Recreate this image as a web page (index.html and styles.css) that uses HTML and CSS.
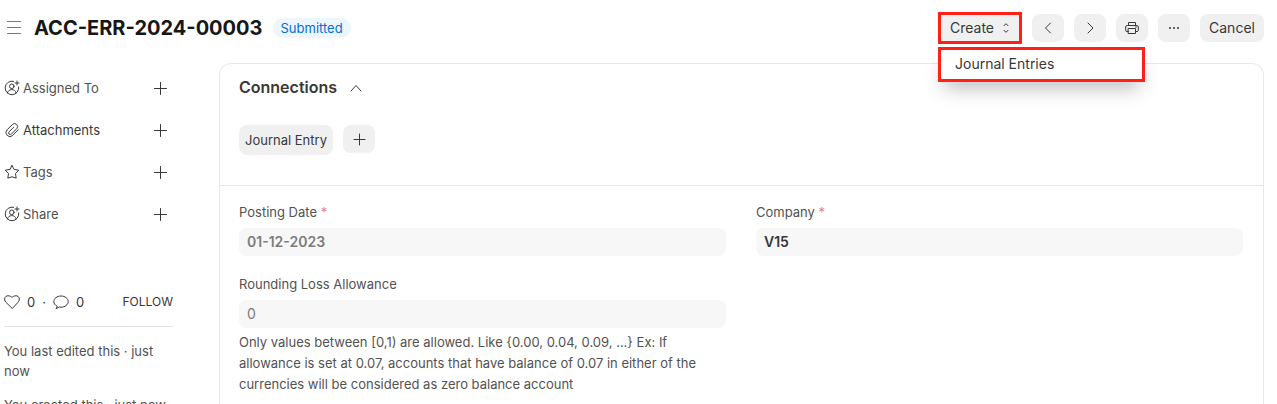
FILE: index.html
```html
<!DOCTYPE html>
<html lang="en">
<head>
<meta charset="utf-8">
<meta name="viewport" content="width=device-width, initial-scale=1">
<title>ACC-ERR-2024-00003</title>
<link rel="stylesheet" href="styles.css">
</head>
<body>
<svg class="defs" aria-hidden="true">
  <symbol id="assign" viewBox="0 0 16 16">
    <path d="M9.6 1.3A6.8 6.8 0 1 0 14.7 6.9"/>
    <circle cx="7.8" cy="6.3" r="2.3"/>
    <path d="M3.4 12.9c.5-2 2.200-3.300 4.400-3.300s3.900 1.300 4.400 3.300M13 1v4M11 3h4"/>
  </symbol>
  <symbol id="plus" viewBox="0 0 16 16"><path d="M8.500 3v11M3 8.500h11"/></symbol>
  <symbol id="plus-large" viewBox="0 0 16 16"><path d="M8.500 2.500v12M2.500 8.500h12"/></symbol>
</svg>
<div class="app">
  <header class="page-head">
    <div class="title-area">
      <button class="menu-toggle" aria-label="Toggle sidebar">
        <svg width="16" height="16" viewBox="0 0 16 16"><path d="M1.500 1.500h13M1.500 7.500h13M1.500 13.500h13"/></svg>
      </button>
      <h1 class="title">ACC-ERR-2024-00003</h1>
      <span class="status">Submitted</span>
    </div>
    <div class="actions">
      <div class="create">
        <button class="btn create-btn" aria-expanded="true">Create
          <svg width="8" height="12" viewBox="0 0 8 12"><path d="M2 3.700l2-2 2 2M2 8.300l2 2 2-2"/></svg>
        </button>
        <div class="menu">
          <a class="menu-item" href="#">Journal Entries</a>
        </div>
      </div>
      <button class="btn icon-btn" aria-label="Previous"><svg width="16" height="16" viewBox="0 0 16 16"><path d="M10.500 3L5.500 8l5 5"/></svg></button>
      <button class="btn icon-btn" aria-label="Next"><svg width="16" height="16" viewBox="0 0 16 16"><path d="M6 3l5 5-5 5"/></svg></button>
      <button class="btn icon-btn" aria-label="Print"><svg width="16" height="16" viewBox="0 0 16 16"><path d="M4.500 5.500V2.500h7v3M4.500 11.500H3A1.300 1.300 0 0 1 1.700 10.200V7A1.500 1.500 0 0 1 3.200 5.500h9.600A1.500 1.500 0 0 1 14.300 7v3.200a1.300 1.300 0 0 1-1.300 1.300h-1.500M4.500 8.500h7v5h-7zM11.500 7h1"/></svg></button>
      <button class="btn icon-btn" aria-label="More"><svg class="dots" width="16" height="16" viewBox="0 0 16 16"><circle cx="4" cy="8" r="1"/><circle cx="8" cy="8" r="1"/><circle cx="12" cy="8" r="1"/></svg></button>
      <button class="btn cancel-btn">Cancel</button>
    </div>
  </header>
  <div class="body">
    <aside class="sidebar">
      <ul class="side-list">
        <li class="side-row"><svg width="16" height="16"><use href="#assign"/></svg><span>Assigned To</span><button class="add" aria-label="Assign"><svg width="16" height="16"><use href="#plus-large"/></svg></button></li>
        <li class="side-row strong"><svg width="16" height="16" viewBox="0 0 16 16"><path d="M13.700 7.100l-5.500 5.700a4 4 0 0 1-5.700-5.600l5.300-5.300a2.900 2.900 0 0 1 4.300-.1 2.900 2.900 0 0 1 .1 4.200l-5.300 5.300a1.500 1.500 0 0 1-2.300 0 1.600 1.600 0 0 1 0-2.200l4.500-4.500" transform="translate(.5 .7)"/></svg><span>Attachments</span><button class="add" aria-label="Attach"><svg width="16" height="16"><use href="#plus-large"/></svg></button></li>
        <li class="side-row"><svg width="16" height="16" viewBox="0 0 16 16"><path d="M8 1.500l2.100 3.900 4.600.8-3.200 3.300.7 4.600L8 12.800 3.800 14.100l.7-4.600L1.300 6.200l4.600-.8z"/></svg><span>Tags</span><button class="add" aria-label="Add tag"><svg width="16" height="16"><use href="#plus-large"/></svg></button></li>
        <li class="side-row"><svg width="16" height="16"><use href="#assign"/></svg><span>Share</span><button class="add" aria-label="Share"><svg width="16" height="16"><use href="#plus-large"/></svg></button></li>
      </ul>
      <div class="stats">
        <button class="stat"><svg width="16" height="16" viewBox="0 0 16 16"><path d="M8 14.300L1.700 8C-.5 5.500.8 1.800 4 1.800c1.800 0 3.100.8 4 1.600.9-.8 2.200-1.600 4-1.600 3.200 0 4.500 3.700 2.300 6.200z"/></svg>0</button>
        <span>·</span>
        <button class="stat"><svg width="16" height="16" viewBox="0 0 16 16"><path d="M4 12.200C2 11.200.8 9.500.8 7.600.8 4.500 4 2 8 2s7.200 2.500 7.200 5.600S12 13.200 8 13.200c-.6 0-1.200 0-1.800-.2L3.400 14.500z"/></svg>0</button>
        <button class="follow">FOLLOW</button>
      </div>
      <p class="activity">You last edited this · just now</p>
      <p class="activity">You created this · just now</p>
    </aside>
    <main class="card">
      <section class="connections">
        <h2 class="section-title">Connections
          <svg width="16" height="16" viewBox="0 0 16 16"><path d="M3 12L8 6.500 13 12"/></svg>
        </h2>
        <div class="links">
          <button class="btn doc-link">Journal Entry</button>
          <button class="btn add-link" aria-label="New Journal Entry"><svg width="16" height="16"><use href="#plus"/></svg></button>
        </div>
      </section>
      <section class="fields">
        <div class="column">
          <div class="field">
            <label for="date">Posting Date <span class="req">*</span></label>
            <input class="muted bold" id="date" value="01-12-2023" readonly>
          </div>
          <div class="field">
            <label for="loss">Rounding Loss Allowance</label>
            <input class="muted" id="loss" value="0" readonly>
            <p class="help">Only values between [0,1) are allowed. Like {0.00, 0.04, 0.09, ...} Ex: If allowance is set at 0.07, accounts that have balance of 0.07 in either of the currencies will be considered as zero balance account</p>
          </div>
        </div>
        <div class="column">
          <div class="field">
            <label for="company">Company <span class="req">*</span></label>
            <input class="bold" id="company" value="V15" readonly>
          </div>
        </div>
      </section>
    </main>
  </div>
</div>
</body>
</html>
```
FILE: styles.css
```css
* { box-sizing: border-box; }
body {
  margin: 0;
  background: #fff;
  color: #383838;
  font: 13px/20px Inter, "Liberation Sans", sans-serif;
}
h1, h2, p, ul { margin: 0; padding: 0; }
button, input { font: inherit; color: inherit; border: 0; }
button { background: none; padding: 0; }
svg {
  display: block;
  flex: none;
  fill: none;
  stroke: #383838;
  stroke-width: 1;
  stroke-linecap: round;
  stroke-linejoin: round;
}
.defs { position: absolute; width: 0; height: 0; }
.app {
  display: flex;
  flex-direction: column;
  height: 100vh;
  overflow: hidden;
}

.page-head {
  display: flex;
  flex: none;
  align-items: flex-start;
  justify-content: space-between;
  padding: 12px 13px 0 6px;
  height: 63px;
}
.title-area, .actions { display: flex; align-items: center; height: 32px; }
.menu-toggle svg { stroke: #777; }
.title {
  margin: 0 10px 0 12px;
  color: #171717;
  font-size: 20px;
  line-height: 28px;
  font-weight: 700;
}
.status {
  padding: 0 8px;
  border-radius: 10px;
  background: #edf6fd;
  color: #0070cc;
}

.actions { gap: 10px; }
.btn {
  height: 28px;
  border-radius: 8px;
  background: #f0f0f0;
  font-size: 14px;
}
.icon-btn { display: grid; place-items: center; width: 32px; }
.dots { fill: #383838; stroke: none; }
.cancel-btn { width: 64px; }
.create { position: relative; }
.create-btn {
  display: flex;
  align-items: center;
  gap: 8px;
  width: 84px;
  height: 32px;
  padding-left: 9px;
  border: 3px solid #ff2116;
  border-radius: 0;
}
.menu {
  position: absolute;
  z-index: 2;
  top: 35px;
  left: 0;
  width: 207px;
  border: 3px solid #ff2116;
  background: #fff;
  box-shadow: 0 12px 20px -6px #0004;
}
.menu-item {
  display: block;
  padding: 4px 14px 5px;
  color: inherit;
  font-size: 14px;
  text-decoration: none;
}

.body {
  display: flex;
  flex: 1;
  min-height: 0;
  padding: 0 13px 0 4px;
  gap: 46px;
}
.sidebar { flex: none; width: 169px; padding-top: 14px; }
.side-list {
  display: grid;
  gap: 20px;
  list-style: none;
  margin-bottom: 67px;
}
.side-row { display: flex; align-items: center; gap: 3px; height: 22px; color: #525252; }
.strong { color: #383838; }
.add { margin: 0 5px 0 auto; }
.stats {
  display: flex;
  align-items: center;
  gap: 7px;
  padding-bottom: 14px;
  border-bottom: 1px solid #e2e2e2;
  margin-bottom: 14px;
}
.stat { display: flex; align-items: center; gap: 7px; }
.follow { margin-left: auto; font-size: 12px; }
.activity { margin-bottom: 14px; color: #525252; }

.card {
  flex: 1;
  border: 1px solid #e8e8e8;
  border-bottom: 0;
  border-radius: 12px 12px 0 0;
}
.connections {
  padding: 11px 19px 30px;
  border-bottom: 1px solid #e8e8e8;
}
.section-title {
  display: flex;
  align-items: center;
  gap: 11px;
  font-size: 16px;
  line-height: 24px;
  font-weight: 600;
}
.links { display: flex; gap: 10px; margin-top: 26px; }
.doc-link { height: 30px; padding: 0 6px; font-size: 13px; }
.add-link { display: grid; place-items: center; width: 32px; }
.fields {
  display: grid;
  grid-template-columns: 1fr 1fr;
  gap: 30px;
  padding: 16px 20px 16px 19px;
}
.column { display: grid; align-content: start; gap: 18px; }
.field label {
  display: block;
  margin-bottom: 6px;
  color: #525252;
}
.req { color: #f08080; }
.field input {
  display: block;
  width: 100%;
  height: 28px;
  padding: 0 8px 1px;
  border-radius: 8px;
  background: #f7f7f7;
  font-size: 14px;
}
.field .muted { color: #7c7c7c; }
.field .bold { font-weight: 600; }
.help { margin-top: 4px; color: #525252; line-height: 21px; }
```
